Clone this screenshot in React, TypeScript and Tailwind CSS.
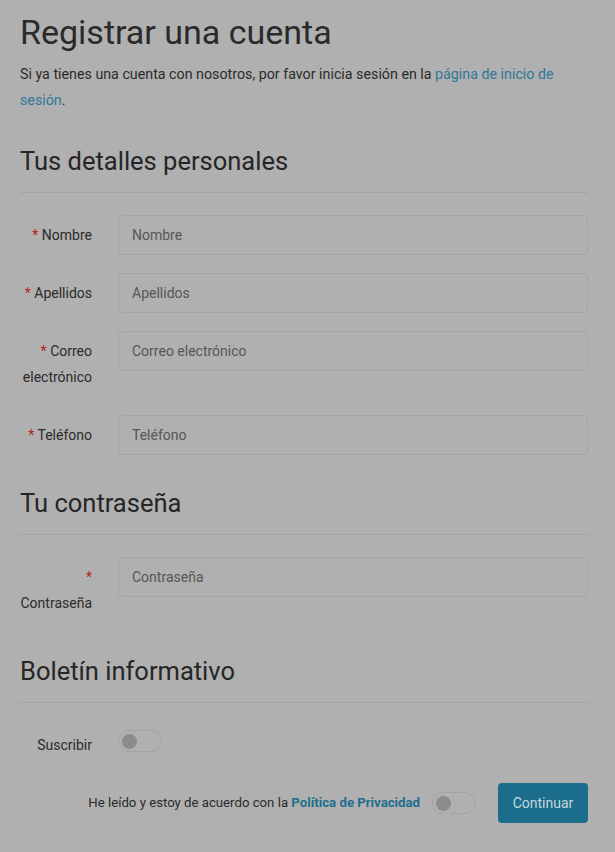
const fields = [
  { label: "Nombre", placeholder: "Nombre", type: "text" },
  { label: "Apellidos", placeholder: "Apellidos", type: "text" },
  { label: "Correo electrónico", placeholder: "Correo electrónico", type: "email" },
  { label: "Teléfono", placeholder: "Teléfono", type: "tel" },
];

function Row({ label, placeholder, type }: { label: string; placeholder: string; type: string }) {
  return (
    <div className="flex items-start">
      <label className="w-[72px] shrink-0 py-[7px] text-right text-[14px] leading-[26px] text-[#2b2b2b]">
        <span className="text-[#b3201f]">*</span> {label}
      </label>
      <input
        type={type}
        placeholder={placeholder}
        className="ml-[26px] h-[40px] min-w-0 flex-1 rounded-[4px] border border-[#a5a5a5] bg-transparent px-[13px] text-[14px] text-[#2b2b2b] outline-none placeholder:text-[#565656]"
      />
    </div>
  );
}

function Toggle({ className = "" }: { className?: string }) {
  return (
    <div className={`flex h-[22px] w-[44px] shrink-0 items-center rounded-full border border-[#a3a3a3] px-[3px] ${className}`}>
      <div className="h-[15px] w-[15px] rounded-full bg-[#8b8b8b]" />
    </div>
  );
}

function Section({ title, children }: { title: string; children: React.ReactNode }) {
  return (
    <section className="mt-[34px]">
      <h2 className="text-[25.5px] leading-[29px] text-[#262626]">{title}</h2>
      <hr className="mt-4 border-0 border-t border-[#a4a4a4]" />
      <div className="mt-[22px] flex flex-col gap-[18px]">{children}</div>
    </section>
  );
}

export default function App() {
  return (
    <div
      className="min-h-screen bg-[#b0b0b0] pl-[20px] pr-[27px] pt-[13px] pb-[30px]"
      style={{ fontFamily: "Roboto, 'Liberation Sans', sans-serif" }}
    >
      <h1 className="text-[34px] leading-[38px] text-[#2a2a2a]">Registrar una cuenta</h1>
      <p className="mt-[10px] text-[14.25px] leading-[26px] text-[#2b2b2b]">
        Si ya tienes una cuenta con nosotros, por favor inicia sesión en la{" "}
        <a className="text-[#2f7897]">página de inicio de sesión</a>.
      </p>

      <Section title="Tus detalles personales">
        {fields.map((f) => (
          <Row key={f.label} {...f} />
        ))}
      </Section>

      <Section title="Tu contraseña">
        <Row label="Contraseña" placeholder="Contraseña" type="password" />
      </Section>

      <Section title="Boletín informativo">
        <div className="flex items-start">
          <span className="w-[72px] shrink-0 py-[7px] text-right text-[14px] leading-[26px] text-[#2b2b2b]">
            Suscribir
          </span>
          <Toggle className="ml-[26px] mt-[5px]" />
        </div>
      </Section>

      <div className="mt-[18px] flex items-center justify-end">
        <span className="text-[13.2px] text-[#2b2b2b]">
          He leído y estoy de acuerdo con la{" "}
          <a className="font-bold text-[#1f6e8d]">Política de Privacidad</a>
        </span>
        <Toggle className="ml-[12px]" />
        <button className="ml-[22px] h-[40px] w-[90px] rounded-[4px] bg-[#1a6d8b] text-[14px] text-[#c8d8df]">
          Continuar
        </button>
      </div>
    </div>
  );
}
